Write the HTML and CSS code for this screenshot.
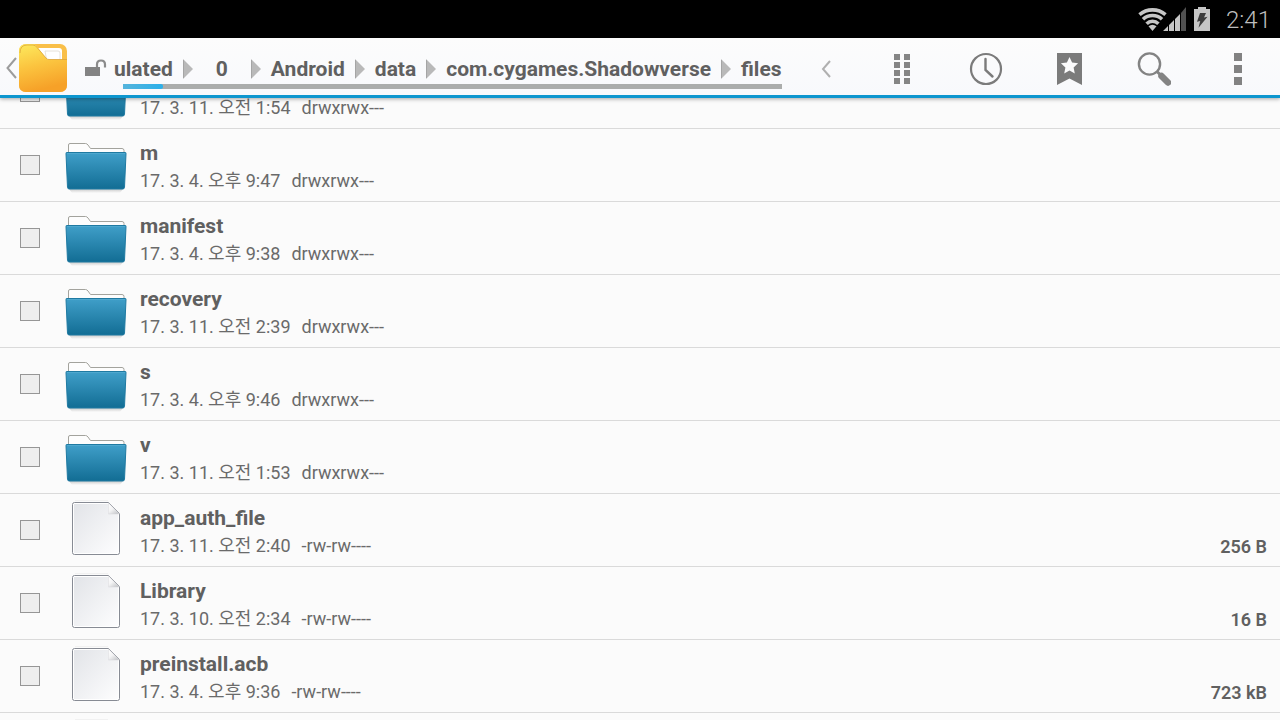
FILE: index.html
```
<!DOCTYPE html>
<html lang="ko">
<head>
<meta charset="utf-8">
<meta name="viewport" content="width=device-width, initial-scale=1">
<title>files</title>
<link rel="stylesheet" href="styles.css">
</head>
<body>
<svg class="defs" width="0" height="0" aria-hidden="true">
  <defs>
    <linearGradient id="blue" x1="0" y1="0" x2="0" y2="1"><stop offset="0" stop-color="#409fc9"/><stop offset="1" stop-color="#126d94"/></linearGradient>
    <linearGradient id="paper" x1="0" y1="0" x2="1" y2="1"><stop offset="0" stop-color="#e2e4e8"/><stop offset="1" stop-color="#fdfdfe"/></linearGradient>
    <linearGradient id="fold" x1="0" y1="0" x2="0.8" y2="1"><stop offset="0" stop-color="#fff"/><stop offset="0.5" stop-color="#f4f4f5"/><stop offset="1" stop-color="#c4c6c9"/></linearGradient>
    <linearGradient id="shade" x1="0" y1="0" x2="0" y2="1"><stop offset="0" stop-color="#aaa"/><stop offset="1" stop-color="#fbfbfb"/></linearGradient>
    <linearGradient id="gold" x1="0" y1="0" x2="0.25" y2="1"><stop offset="0" stop-color="#fdea5e"/><stop offset="0.5" stop-color="#fbc43f"/><stop offset="1" stop-color="#f6a128"/></linearGradient>
  </defs>
  <symbol id="folder" viewBox="0 0 64 64">
    <path d="M5 56h54l-3 4H8z" fill="url(#shade)" opacity=".6"/>
    <path d="M4.500 22V12q0-1.500 1.500-1.500h15.500q1.500 0 2.500 1.500l2.500 3.500h31.500q2 0 2 2V22z" fill="#fdfdfd" stroke="#a3a39d"/>
    <path d="M2.500 19.500h59q.6 0 .5 1l-1.500 34q-.1 1.500-2 1.500H5.500q-1.900 0-2-1.500l-1.500-34q-.1-1 .5-1z" fill="url(#blue)" stroke="#1f7aa2"/>
    <path d="M3 20.500h58" stroke="#60b3d6" opacity=".5"/>
  </symbol>
  <symbol id="file" viewBox="0 0 64 64">
    <path d="M11 2.500h33" stroke="#f1f1f1"/>
    <path d="M10.500 4.500h34l11 11v39q0 2-2 2h-43q-2 0-2-2v-48q0-2 2-2z" fill="#fff" stroke="#878b94"/>
    <path d="M10 6h34v10h10v39H10z" fill="url(#paper)"/>
    <path d="M44.500 5v11h11z" fill="url(#fold)" stroke="#d4d5d8" stroke-width=".5"/>
  </symbol>
  <symbol id="arrow" viewBox="0 0 10 20"><path d="M0 0l10 10L0 20z" fill="#b9b9b9"/><path d="M.5 1v18" stroke="#a5a5a5"/></symbol>
</svg>

<div class="screen">
  <div class="status">
    <svg class="signals" width="74" height="28" viewBox="0 0 74 28" role="img" aria-label="Wi-Fi, signal, battery charging">
      <g fill="none" stroke="#c6c6c6" stroke-width="3.600">
        <path d="M1.500 9.700a20 20 0 0 1 26 0"/><path d="M5 14.200a14 14 0 0 1 19 0"/><path d="M8.600 18.700a8.500 8.500 0 0 1 11.800 0"/>
      </g>
      <path d="M10.500 21.200q4-3 8 0l-4 4.800z" fill="#c6c6c6"/>
      <path d="M25 26l5-5v5zM31 26v-6l5-5v11zM37 26V14l5-5v17z" fill="#c6c6c6"/>
      <path d="M43 26V8l5-6v24z" fill="#505050"/>
      <path d="M56 4h4V2h8v2h4v22H56z" fill="#c6c6c6"/>
      <path d="M62 8h6l-2 4.500 3.500-.8-9 11 1.700-6.800-3.200.8z" fill="#3c3c3c"/>
    </svg>
    <time class="clock">2:41</time>
  </div>

  <header class="bar">
    <button class="home" aria-label="Up">
      <svg width="13" height="22" viewBox="0 0 13 22"><path d="M11 1L2.500 11 11 21" fill="none" stroke="#9c9c9c" stroke-width="2"/></svg>
      <svg width="48" height="48" viewBox="0 0 48 48">
        <rect width="48" height="48" rx="7" fill="#f9bf48"/>
        <path d="M19 4h21q3 0 3 3v12H26z" fill="#fff"/>
        <path d="M26 7h13q2 0 2 2v9H28z" fill="#fff" stroke="#dfdbd0" stroke-width=".8"/>
        <path d="M0 7q0-7 8-7h6q2.500 0 4 2.500L27 14q1 1.500 3 1.500h18V41q0 7-7 7H7q-7 0-7-7z" fill="url(#gold)"/>
        <path d="M1 9q0-8 7-8h6q2.500 0 4 2.500L27 14q1 1.500 3 1.500h18" fill="none" stroke="#dca53a" stroke-width=".8"/>
      </svg>
    </button>
    <svg class="lock" width="22" height="18" viewBox="0 0 22 18" role="img" aria-label="Writable"><path d="M0 8h15v9H0z" fill="#838383"/><path d="M12 8V5.500q0-4 4-4t4 4V8.500" fill="none" stroke="#8b8b8b" stroke-width="2.200"/></svg>
    <div class="path">
      <nav class="crumbs" aria-label="Path">
        <a href="#">ulated</a><svg><use href="#arrow"/></svg>
        <a href="#">0</a><svg><use href="#arrow"/></svg>
        <a href="#">Android</a><svg><use href="#arrow"/></svg>
        <a href="#">data</a><svg><use href="#arrow"/></svg>
        <a href="#">com.cygames.Shadowverse</a><svg><use href="#arrow"/></svg>
        <a href="#">files</a>
      </nav>
      <div class="track"><div class="used"></div></div>
    </div>
    <div class="tools">
      <button class="more-path" aria-label="Show path"><svg width="12" height="20" viewBox="0 0 12 20"><path d="M10 2L3 10l7 8" fill="none" stroke="#b0b0b0" stroke-width="2"/></svg></button>
      <button class="tool" aria-label="View"><svg width="34" height="34" viewBox="0 0 34 34"><path d="M9 2h6v6H9zM19 2h6v6h-6zM9 10h6v6H9zM19 10h6v6h-6zM9 18h6v6H9zM19 18h6v6h-6zM9 26h6v6H9zM19 26h6v6h-6z" fill="#858585"/></svg></button>
      <button class="tool" aria-label="Recent"><svg width="34" height="34" viewBox="0 0 34 34" fill="none" stroke="#7b7b7b" stroke-linecap="round"><circle cx="17" cy="17" r="15" stroke-width="2.200"/><path d="M16.500 7v11l7 6.500" stroke-width="2.400"/></svg></button>
      <button class="tool" aria-label="Bookmarks"><svg width="34" height="34" viewBox="0 0 34 34"><path d="M4 1h25v32l-12.500-6.500L4 33z" fill="#7b7b7b"/><path d="M16.500 5l2.600 5.600 6 .7-4.500 4.100 1.200 6-5.300-3-5.300 3 1.200-6-4.500-4.100 6-.7z" fill="#fbfbfc"/></svg></button>
      <button class="tool" aria-label="Search"><svg width="34" height="34" viewBox="0 0 34 34" fill="none" stroke="#838383"><circle cx="12.500" cy="12" r="10.600" stroke-width="2.400"/><path d="M20 19.500l5 5" stroke-width="3"/><path d="M24.500 24l6.500 6.500" stroke-width="6.500" stroke-linecap="round"/></svg></button>
      <button class="tool" aria-label="More options"><svg width="34" height="34" viewBox="0 0 34 34"><path d="M13 1h8v8h-8zM13 13h8v8h-8zM13 25h8v8h-8z" fill="#828282"/></svg></button>
    </div>
  </header>

  <main class="view">
    <ul class="list">
      <li class="row"><input type="checkbox" class="tick" aria-label="Folder"><svg class="icon"><use href="#folder"/></svg><div class="info"><div class="name"></div><div class="meta"><span>17. 3. 11. 오전 1:54</span><span>drwxrwx---</span></div></div></li>
      <li class="row"><input type="checkbox" class="tick" aria-label="m"><svg class="icon"><use href="#folder"/></svg><div class="info"><div class="name">m</div><div class="meta"><span>17. 3. 4. 오후 9:47</span><span>drwxrwx---</span></div></div></li>
      <li class="row"><input type="checkbox" class="tick" aria-label="manifest"><svg class="icon"><use href="#folder"/></svg><div class="info"><div class="name">manifest</div><div class="meta"><span>17. 3. 4. 오후 9:38</span><span>drwxrwx---</span></div></div></li>
      <li class="row"><input type="checkbox" class="tick" aria-label="recovery"><svg class="icon"><use href="#folder"/></svg><div class="info"><div class="name">recovery</div><div class="meta"><span>17. 3. 11. 오전 2:39</span><span>drwxrwx---</span></div></div></li>
      <li class="row"><input type="checkbox" class="tick" aria-label="s"><svg class="icon"><use href="#folder"/></svg><div class="info"><div class="name">s</div><div class="meta"><span>17. 3. 4. 오후 9:46</span><span>drwxrwx---</span></div></div></li>
      <li class="row"><input type="checkbox" class="tick" aria-label="v"><svg class="icon"><use href="#folder"/></svg><div class="info"><div class="name">v</div><div class="meta"><span>17. 3. 11. 오전 1:53</span><span>drwxrwx---</span></div></div></li>
      <li class="row"><input type="checkbox" class="tick" aria-label="app_auth_file"><svg class="icon"><use href="#file"/></svg><div class="info"><div class="name">app_auth_file</div><div class="meta"><span>17. 3. 11. 오전 2:40</span><span>-rw-rw----</span></div></div><div class="size">256 B</div></li>
      <li class="row"><input type="checkbox" class="tick" aria-label="Library"><svg class="icon"><use href="#file"/></svg><div class="info"><div class="name">Library</div><div class="meta"><span>17. 3. 10. 오전 2:34</span><span>-rw-rw----</span></div></div><div class="size">16 B</div></li>
      <li class="row"><input type="checkbox" class="tick" aria-label="preinstall.acb"><svg class="icon"><use href="#file"/></svg><div class="info"><div class="name">preinstall.acb</div><div class="meta"><span>17. 3. 4. 오후 9:36</span><span>-rw-rw----</span></div></div><div class="size">723 kB</div></li>
      <li class="row"><input type="checkbox" class="tick" aria-label="File"><svg class="icon"><use href="#file"/></svg></li>
    </ul>
  </main>
</div>
</body>
</html>
```
FILE: styles.css
```
* { box-sizing: border-box; }
body {
  margin: 0;
  background: #fbfbfb;
  color: #606060;
  font-family: Roboto, "Noto Sans CJK KR", sans-serif;
}
button { border: 0; padding: 0; background: none; }
svg { display: block; flex: none; }
.defs { position: absolute; }
.screen { display: flex; flex-direction: column; height: 100vh; overflow: hidden; }

.status {
  display: flex;
  flex: none;
  align-items: center;
  justify-content: flex-end;
  gap: 14px;
  height: 38px;
  padding-right: 9px;
  background: #000;
}
.clock { color: #bebebe; font-size: 24px; font-weight: 300; line-height: 36px; padding-top: 2px; }

.bar {
  display: flex;
  flex: none;
  align-items: center;
  height: 60px;
  border-bottom: 3px solid #0d96cf;
  background: linear-gradient(#fcfcfc, #f8f9fc);
  box-shadow: 0 1px 4px rgba(0, 0, 0, .35);
  z-index: 1;
}
.home { display: flex; align-items: center; gap: 1px; padding-left: 5px; padding-top: 3px; }
.lock { margin-left: 18px; margin-top: 3px; }
.path { margin-left: 7px; padding-top: 8px; }
.crumbs { display: flex; align-items: center; gap: 10px; height: 32px; padding-top: 2px; }
.crumbs a {
  min-width: 38px;
  color: #606060;
  font-size: 21px;
  font-weight: 700;
  line-height: 28px;
  text-align: center;
  text-decoration: none;
}
.crumbs svg { width: 10px; height: 20px; }
.track { height: 5px; margin-left: 9px; background: #abadac; }
.used { width: 6%; height: 5px; background: linear-gradient(90deg, #55b4dc, #2bb0ea); border-radius: 0 2px 2px 0; }
.tools { display: flex; align-items: center; margin-left: auto; }
.more-path { display: grid; place-items: center; width: 68px; height: 57px; padding-top: 4px; }
.tool { display: grid; place-items: center; width: 84px; height: 57px; padding-top: 4px; }

.view { flex: 1; min-height: 0; overflow: hidden; }
.list { list-style: none; margin: -42px 0 0; padding: 0; }
.row {
  display: flex;
  align-items: flex-start;
  height: 73px;
  padding: 0 13px 0 20px;
  border-bottom: 1px solid #dadada;
}
.tick {
  appearance: none;
  width: 20px;
  height: 20px;
  margin: 26px 24px 0 0;
  border: 1px solid #969696;
  background: #eee;
}
.icon { width: 64px; height: 64px; margin-top: 4px; }
.info { flex: 1; padding: 10px 0 0 12px; }
.name { min-height: 28px; font-size: 21px; font-weight: 700; line-height: 28px; }
.meta { display: flex; gap: 11px; color: #6a6a6a; font-size: 18px; line-height: 28px; }
.size { padding-top: 39px; font-size: 18px; font-weight: 600; line-height: 28px; }
```
